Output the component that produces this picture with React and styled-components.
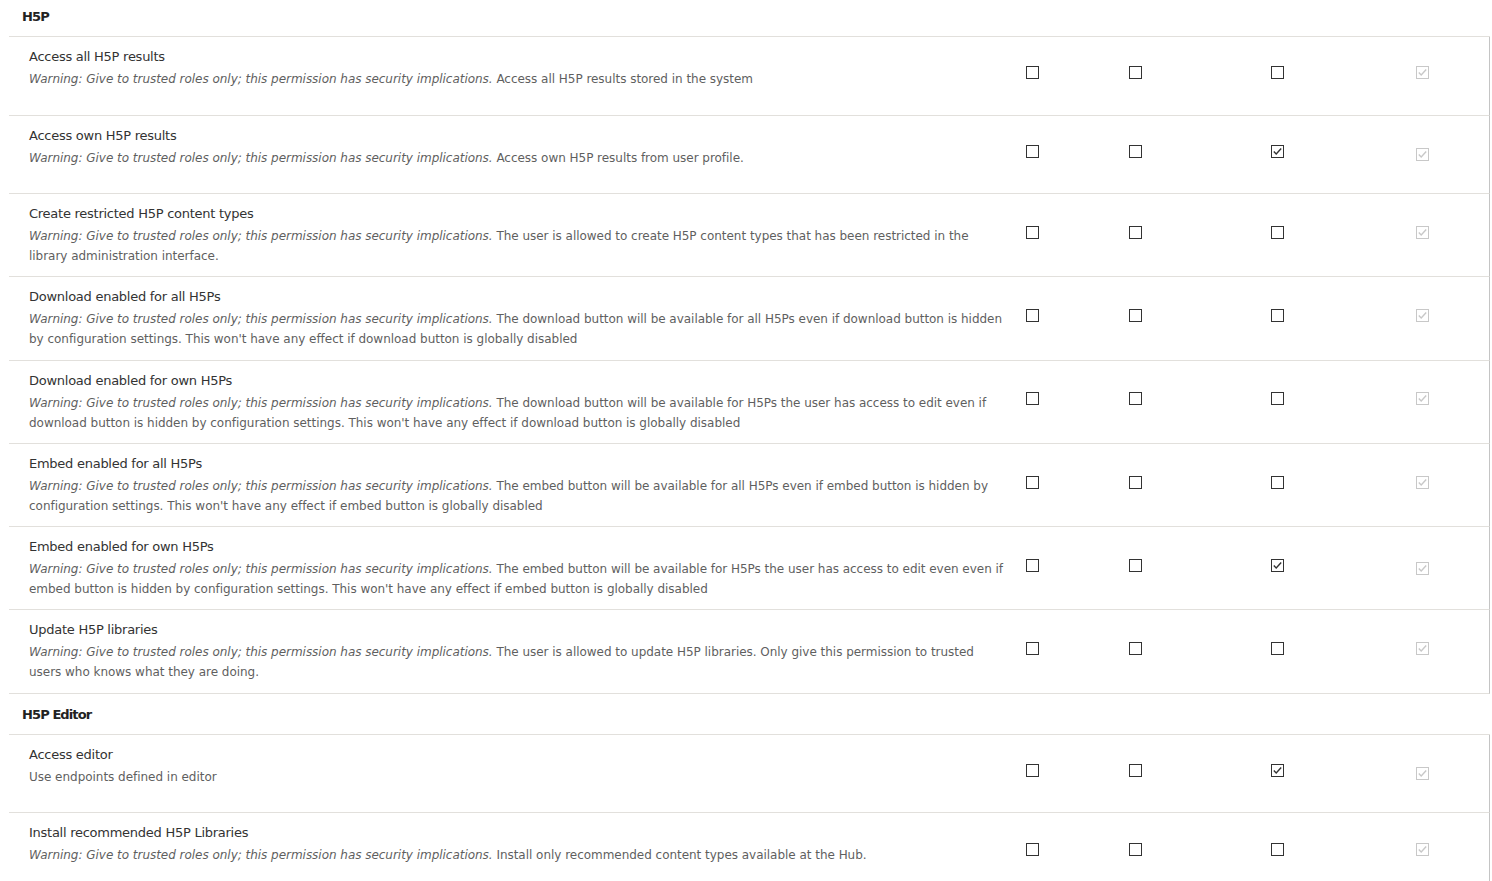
import React from 'react';
import styled, { createGlobalStyle } from 'styled-components';

const GlobalStyle = createGlobalStyle`
  body {
    margin: 0;
    background: #ffffff;
    font-family: "DejaVu Sans", "Liberation Sans", sans-serif;
    color: #333333;
  }
`;

const Table = styled.div`
  width: 1481px;
  margin: -4px 0 0 9px;
`;

const ModuleRow = styled.div`
  box-sizing: border-box;
  height: 41px;
  padding: 11px 13px 9px;
  border-bottom: 1px solid #e2e0dc;
  font-size: 13px;
  line-height: 20px;
  font-weight: bold;
  letter-spacing: -0.9px;
  color: #222222;
`;

const PermRow = styled.div`
  display: grid;
  grid-template-columns: 1007px 103px 142px 145px 84px;
  align-items: center;
  min-height: 77.5px;
  border-bottom: 1px solid #e2e0dc;
  border-right: 1px solid #c4c4c4;
`;

const Info = styled.div`
  align-self: start;
  padding: 9px 9.5px 10.3px 20px;
`;

const Title = styled.div`
  font-size: 13px;
  line-height: 21px;
  letter-spacing: -0.26px;
  color: #333333;
`;

const Desc = styled.div`
  margin-top: 2px;
  font-size: 12px;
  line-height: 20px;
  letter-spacing: -0.03px;
  color: #5f5f5f;

  em {
    font-style: italic;
  }
`;

const Cell = styled.div`
  padding-left: 10px;
  display: flex;
  align-items: center;
  margin-bottom: ${(p) => (p.$centered ? '0' : '6px')};
`;

const Box = styled.span`
  box-sizing: border-box;
  width: 13px;
  height: 13px;
  border: 1px solid ${(p) => (p.$disabled ? '#c8c8c8' : '#333333')};
  background: #ffffff;
  display: flex;
  align-items: center;
  justify-content: center;
`;

function Checkbox({ checked, disabled }) {
  return (
    <Box $disabled={disabled}>
      {checked && (
        <svg width="11" height="11" viewBox="0 0 11 11">
          <path
            d="M1.8 5.6 L4.2 8 L9.2 2.6"
            fill="none"
            stroke={disabled ? '#c8c8c8' : '#333333'}
            strokeWidth="1.4"
          />
        </svg>
      )}
    </Box>
  );
}

const WARN = 'Warning: Give to trusted roles only; this permission has security implications.';

const h5p = [
  { title: 'Access all H5P results', warn: true, text: 'Access all H5P results stored in the system', on: [0, 0, 0] },
  { title: 'Access own H5P results', warn: true, text: 'Access own H5P results from user profile.', on: [0, 0, 1] },
  { title: 'Create restricted H5P content types', warn: true, text: 'The user is allowed to create H5P content types that has been restricted in the library administration interface.', on: [0, 0, 0] },
  { title: 'Download enabled for all H5Ps', warn: true, text: "The download button will be available for all H5Ps even if download button is hidden by configuration settings. This won't have any effect if download button is globally disabled", on: [0, 0, 0] },
  { title: 'Download enabled for own H5Ps', warn: true, text: "The download button will be available for H5Ps the user has access to edit even if download button is hidden by configuration settings. This won't have any effect if download button is globally disabled", on: [0, 0, 0] },
  { title: 'Embed enabled for all H5Ps', warn: true, text: "The embed button will be available for all H5Ps even if embed button is hidden by configuration settings. This won't have any effect if embed button is globally disabled", on: [0, 0, 0] },
  { title: 'Embed enabled for own H5Ps', warn: true, text: "The embed button will be available for H5Ps the user has access to edit even even if embed button is hidden by configuration settings. This won't have any effect if embed button is globally disabled", on: [0, 0, 1] },
  { title: 'Update H5P libraries', warn: true, text: 'The user is allowed to update H5P libraries. Only give this permission to trusted users who knows what they are doing.', on: [0, 0, 0] },
];

const editor = [
  { title: 'Access editor', warn: false, text: 'Use endpoints defined in editor', on: [0, 0, 1] },
  { title: 'Install recommended H5P Libraries', warn: true, text: 'Install only recommended content types available at the Hub.', on: [0, 0, 0] },
];

function Permission({ item }) {
  return (
    <PermRow>
      <Info>
        <Title>{item.title}</Title>
        <Desc>
          {item.warn && (
            <>
              <em>{WARN}</em>{' '}
            </>
          )}
          {item.text}
        </Desc>
      </Info>
      {item.on.map((v, i) => (
        <Cell key={i}>
          <Checkbox checked={!!v} />
        </Cell>
      ))}
      <Cell $centered={!!item.on[2]}>
        <Checkbox checked disabled />
      </Cell>
    </PermRow>
  );
}

export default function App() {
  return (
    <>
      <GlobalStyle />
      <Table>
        <ModuleRow>H5P</ModuleRow>
        {h5p.map((item) => (
          <Permission key={item.title} item={item} />
        ))}
        <ModuleRow>H5P Editor</ModuleRow>
        {editor.map((item) => (
          <Permission key={item.title} item={item} />
        ))}
      </Table>
    </>
  );
}
